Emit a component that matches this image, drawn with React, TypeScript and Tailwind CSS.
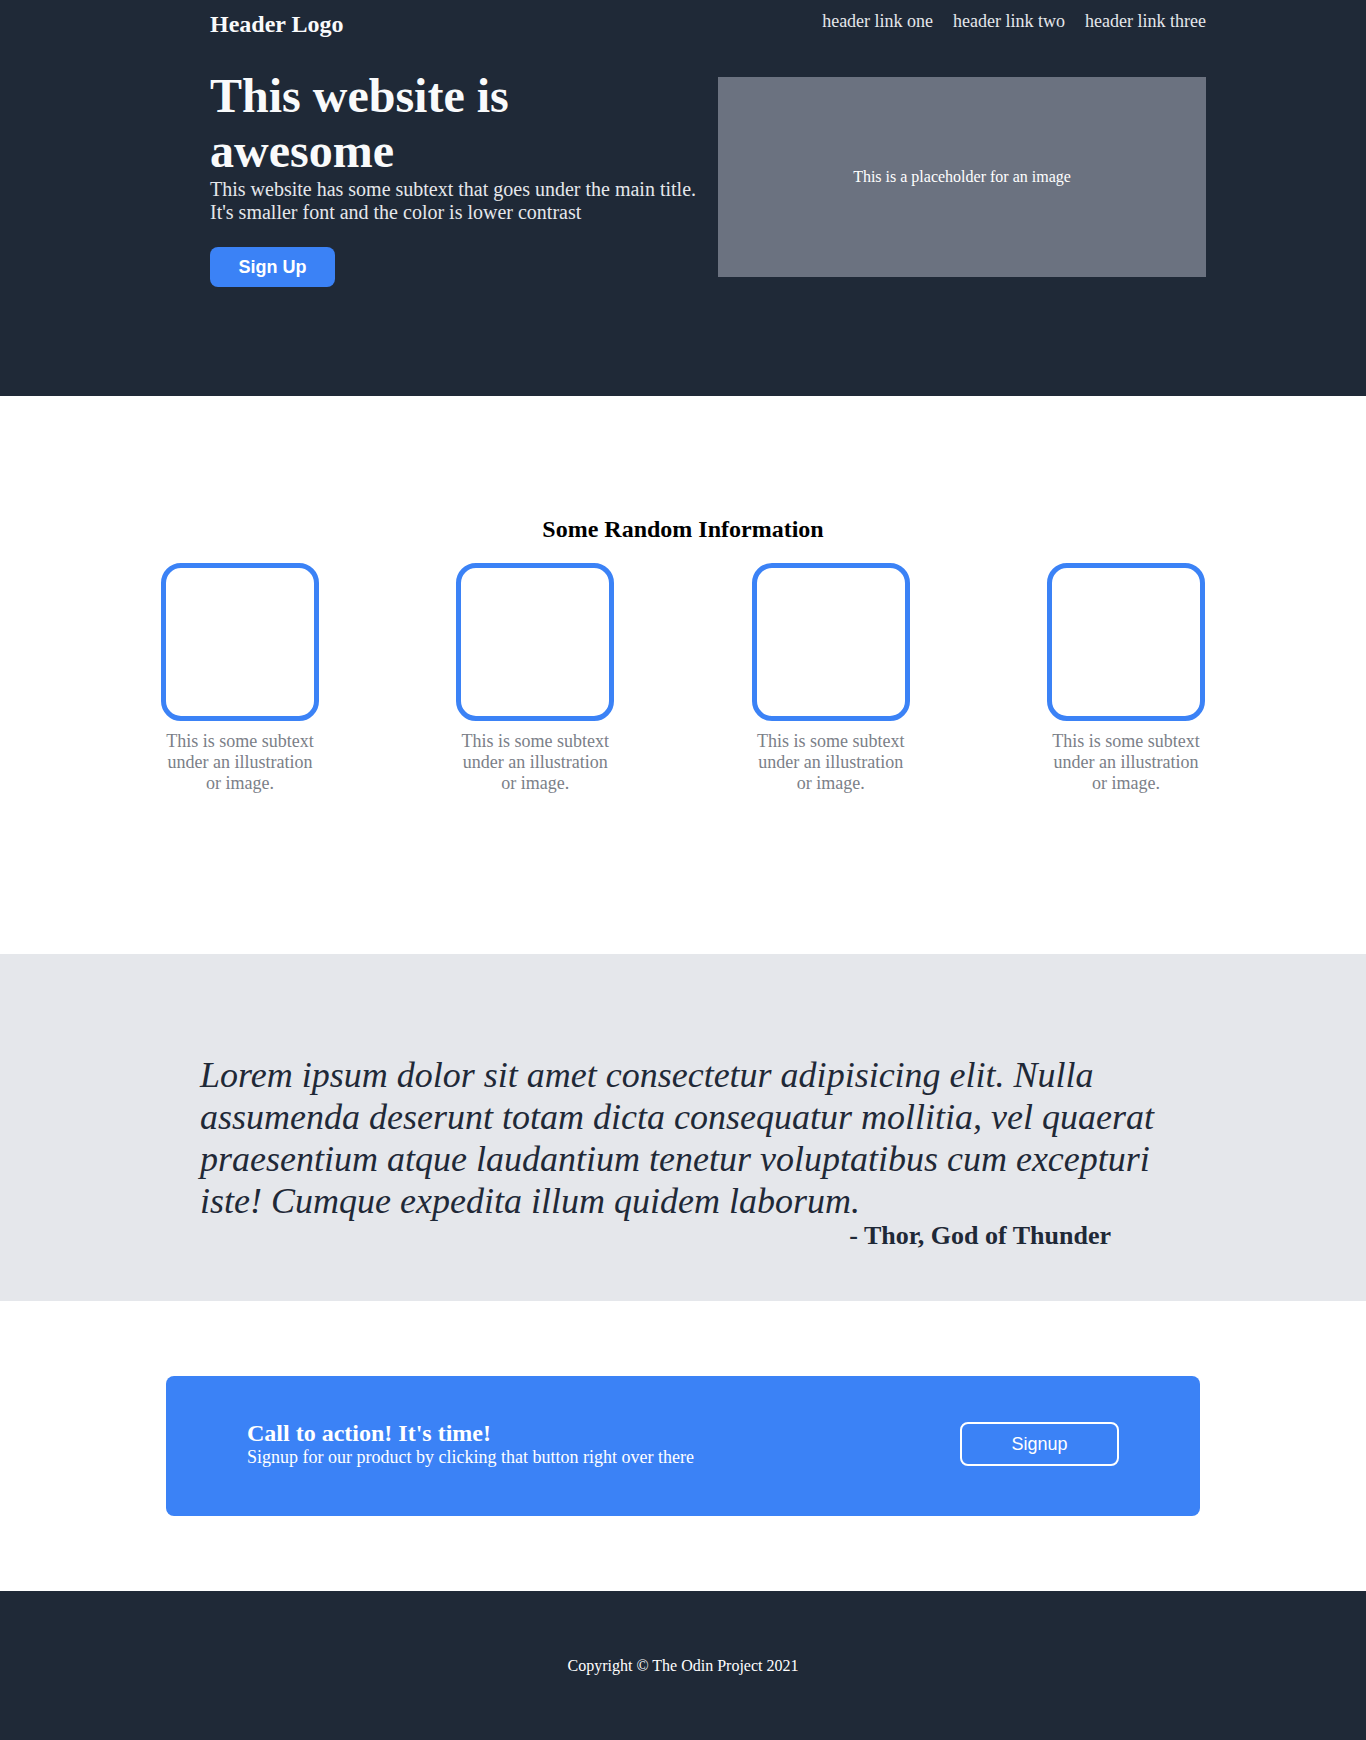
export default function App() {
  return (
    <div className="font-['Liberation_Serif',serif] min-h-[1740px] bg-white">
      {/* Hero */}
      <section className="bg-[#1f2937] h-[396px]">
        <div className="mx-auto w-[1046px] pl-[50px]">
          <header className="flex justify-between items-start h-[41px]">
            <div className="mt-[10px] text-[24px] leading-[28px] font-bold text-[#f9fafb]">Header Logo</div>
            <nav className="mt-[11px] flex gap-[20px] text-[18px] leading-[21px] text-[#e5e7eb]">
              <a href="#">header link one</a>
              <a href="#">header link two</a>
              <a href="#">header link three</a>
            </nav>
          </header>
          <div className="flex justify-between items-start">
            <div className="w-[490px] mt-[27px]">
              <h1 className="text-[48px] leading-[55px] font-bold text-[#f9fafb]">This website is awesome</h1>
              <p className="text-[20px] leading-[23px] text-[#e5e7eb]">
                This website has some subtext that goes under the main title. It's smaller font and the color is lower contrast
              </p>
              <button className="mt-[23px] w-[125px] h-[40px] rounded-lg bg-[#3b82f6] text-white text-[18px] font-bold font-['Liberation_Sans',Arial,sans-serif]">
                Sign Up
              </button>
            </div>
            <div className="mt-[36px] w-[488px] h-[200px] bg-[#6b7280] flex items-center justify-center text-white text-[16px]">
              This is a placeholder for an image
            </div>
          </div>
        </div>
      </section>

      {/* Info */}
      <section className="h-[558px] pt-[119px]">
        <h2 className="text-center text-[24px] leading-[28px] font-bold text-black">Some Random Information</h2>
        <div className="mx-auto w-[1044px] mt-[20px] flex justify-between">
          {[0, 1, 2, 3].map((i) => (
            <div key={i} className="w-[158px] flex flex-col items-center">
              <div className="w-[158px] h-[158px] border-[5px] border-[#3b82f6] rounded-[20px]" />
              <p className="mt-[10px] text-center text-[18px] leading-[21px] text-[#7b8088]">
                This is some subtext under an illustration or image.
              </p>
            </div>
          ))}
        </div>
      </section>

      {/* Quote */}
      <section className="h-[347px] bg-[#e5e7eb]">
        <div className="mx-auto w-[966px] pt-[100px] text-[#1f2937]">
          <p className="text-[36px] leading-[42px] italic">
            Lorem ipsum dolor sit amet consectetur adipisicing elit. Nulla assumenda deserunt totam dicta consequatur mollitia, vel quaerat praesentium atque laudantium tenetur voluptatibus cum excepturi iste! Cumque expedita illum quidem laborum.
          </p>
          <p className="text-right pr-[55px] text-[26px] leading-[28px] font-bold">- Thor, God of Thunder</p>
        </div>
      </section>

      {/* CTA */}
      <section className="py-[75px]">
        <div className="mx-auto w-[1034px] h-[140px] pb-[4px] rounded-lg bg-[#3b82f6] px-[81px] flex items-center justify-between text-white">
          <div>
            <h3 className="text-[24px] leading-[26px] font-bold">Call to action! It's time!</h3>
            <p className="text-[18px] leading-[22px]">Signup for our product by clicking that button right over there</p>
          </div>
          <button className="w-[159px] h-[44px] border-2 border-white rounded-lg text-white text-[18px] font-['Liberation_Sans',Arial,sans-serif]">
            Signup
          </button>
        </div>
      </section>

      {/* Footer */}
      <footer className="h-[149px] bg-[#1f2937] flex items-center justify-center text-white text-[16px]">
        Copyright © The Odin Project 2021
      </footer>
    </div>
  );
}
